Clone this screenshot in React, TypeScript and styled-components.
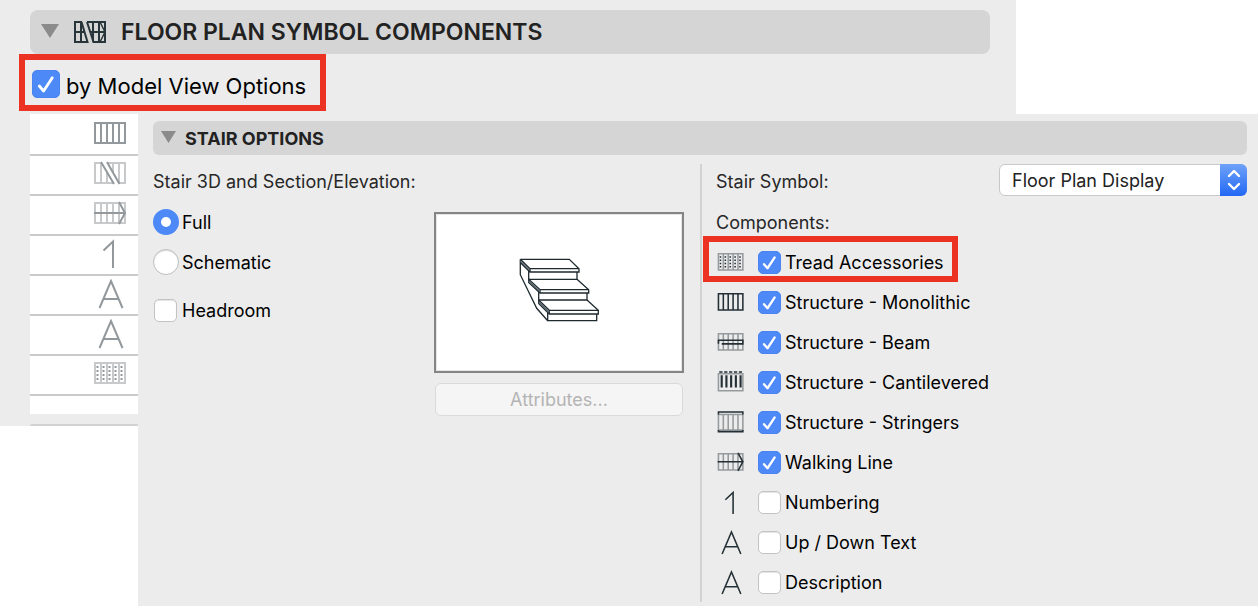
import React, { useState } from "react";
import styled, { createGlobalStyle, css } from "styled-components";

const GlobalStyle = createGlobalStyle`
  *, *::before, *::after { box-sizing: border-box; }
  body {
    margin: 0;
    background: #ffffff;
    color: #0c0c0c;
    font-family: Inter, "Liberation Sans", sans-serif;
    font-size: 18px;
    line-height: 24px;
  }
`;

/* ---------- page and panels ---------- */

const Page = styled.main`
  display: grid;
  grid-template-columns: 138px minmax(0, 1fr);
  grid-template-rows: 114px auto;
  min-height: 100vh;
`;

const SymbolPanel = styled.section`
  grid-area: 1 / 1 / 3 / 3;
  align-self: start;
  margin-right: 242px;
  padding: 10px 26px 0 30px;
  background: #ececec;
`;

const StairPanel = styled.section`
  grid-area: 2 / 2;
  padding: 7px 11px 3px 15px;
  background: #ececec;
`;

const SectionHeader = styled.button<{ $large?: boolean }>`
  display: flex;
  align-items: center;
  width: 100%;
  border: 0;
  background: #d5d5d5;
  color: #222222;
  font-family: inherit;
  text-align: left;
  white-space: nowrap;
  ${(p) =>
    p.$large
      ? css`
          height: 44px;
          padding: 0 11px;
          gap: 15px;
          border-radius: 8px;
          font-size: 23px;
          font-weight: 600;
        `
      : css`
          height: 34px;
          padding: 0 8px;
          gap: 9px;
          border-radius: 6px;
          font-size: 18px;
          font-weight: 700;
        `}
`;

const Triangle = styled.span<{ $large?: boolean }>`
  width: ${(p) => (p.$large ? 18 : 15)}px;
  height: ${(p) => (p.$large ? 14 : 12)}px;
  margin-bottom: 2px;
  background: #8b8b8b;
  clip-path: polygon(0 0, 100% 0, 50% 100%);
`;

/* ---------- option rows ---------- */

const OptionRow = styled.label<{ $large?: boolean; $tight?: boolean; $spaced?: boolean }>`
  position: relative;
  display: flex;
  align-items: center;
  gap: ${(p) => (p.$large ? 6 : p.$tight ? 3 : 4)}px;
  width: fit-content;
  height: ${(p) => (p.$large ? 60 : 40)}px;
  margin-top: ${(p) => (p.$spaced ? 8 : 0)}px;
  padding-left: ${(p) => (p.$large ? 2 : 0)}px;
  font-size: ${(p) => (p.$large ? 22 : 18)}px;
  color: #000000;
  white-space: nowrap;
`;

const OptionText = styled.span<{ $large?: boolean }>`
  padding-top: ${(p) => (p.$large ? 4 : 2)}px;
`;

const Highlight = styled.span<{ $large?: boolean }>`
  position: absolute;
  inset: ${(p) => (p.$large ? "0 -20px 3px -11px" : "-6px -14px 0 -13px")};
  border: 6px solid #eb3223;
  pointer-events: none;
`;

const IconSlot = styled.span`
  display: flex;
  margin-right: 10px;
`;

const BoxStack = styled.span<{ $size: number; $inset?: boolean }>`
  display: grid;
  width: ${(p) => p.$size}px;
  height: ${(p) => p.$size}px;
  margin: 0 ${(p) => (p.$inset ? "2px 0 1px" : "0")};

  > * {
    grid-area: 1 / 1;
    width: 100%;
    height: 100%;
    margin: 0;
  }

  svg {
    z-index: 1;
    pointer-events: none;
  }
`;

const CheckInput = styled.input`
  appearance: none;
  border: 1px solid #c3c3c3;
  border-radius: 5px;
  background: #ffffff;
  box-shadow: inset 0 1px 1px #e4e4e4;

  &:checked {
    border-color: #4a84f2;
    background: #4d89f7;
    box-shadow: none;
  }
`;

const RadioInput = styled.input`
  appearance: none;
  width: 26px;
  height: 26px;
  margin: 0;
  border: 1px solid #bdbdbd;
  border-radius: 50%;
  background: #ffffff;
  box-shadow: inset 0 1px 1px #dcdcdc;

  &:checked {
    border: 8px solid #4d89f7;
    box-shadow: none;
  }
`;

/* ---------- component list of the rear panel ---------- */

const IconList = styled.ul`
  height: 300px;
  margin: 0;
  padding: 2px 0 0;
  background: #ffffff;
  list-style: none;
`;

const IconListItem = styled.li`
  display: flex;
  align-items: center;
  height: 40px;
  padding: 0 0 4px 64px;
  border-bottom: 2px solid #cacaca;
`;

const NextSectionEdge = styled.div`
  height: 2px;
  margin-top: 10px;
  border-radius: 3px 3px 0 0;
  background: #d2d2d2;
`;

/* ---------- stair options body ---------- */

const Columns = styled.div`
  display: grid;
  grid-template-columns: minmax(0, 1fr) minmax(0, 1fr);
  margin-top: 9px;
`;

const SymbolColumn = styled.div`
  padding-left: 14px;
  border-left: 2px solid #d2d2d2;
`;

const FieldRow = styled.div`
  display: flex;
  align-items: center;
  justify-content: space-between;
  height: 32px;
  margin-bottom: 6px;
  color: #272727;
`;

const FieldLabel = styled.label`
  padding-top: 4px;
`;

const GroupLabel = styled.div`
  display: flex;
  align-items: center;
  height: 40px;
  padding-top: 2px;
  color: #272727;
`;

const ViewBody = styled.div`
  display: flex;
  justify-content: space-between;
  padding-right: 16px;
`;

const PreviewColumn = styled.div`
  display: flex;
  flex-direction: column;
  gap: 10px;
  width: 250px;
  padding-top: 10px;
`;

const Preview = styled.div`
  display: flex;
  align-items: center;
  justify-content: center;
  height: 161px;
  padding-bottom: 6px;
  border: 2px solid #858585;
  background: #ffffff;
  box-shadow: inset 0 0 0 1px #e6e6e6;
`;

const PushButton = styled.button`
  height: 33px;
  margin: 0 1px;
  border: 1px solid #dadada;
  border-radius: 6px;
  background: #f5f5f5;
  color: #b4b4b4;
  font-family: inherit;
  font-size: 18px;
`;

const SelectWrap = styled.div`
  display: grid;
  width: 248px;
  height: 32px;

  > * {
    grid-area: 1 / 1;
  }
`;

const Select = styled.select`
  appearance: none;
  width: 100%;
  height: 100%;
  padding: 0 36px 0 12px;
  border: 1px solid #c8c8c8;
  border-radius: 6px;
  background: #ffffff;
  color: #222222;
  font-family: inherit;
  font-size: 18px;
`;

const SelectArrows = styled.span`
  justify-self: end;
  display: flex;
  align-items: center;
  justify-content: center;
  width: 27px;
  border-radius: 0 6px 6px 0;
  background: linear-gradient(#6fa2f8, #2268f5);
  pointer-events: none;
`;

/* ---------- icons ---------- */

type IconName =
  | "monolithic"
  | "break"
  | "walking"
  | "one"
  | "letter"
  | "tread"
  | "beam"
  | "cantilevered"
  | "stringers";

type Tone = { dark: string; light: string };
const FADED: Tone = { dark: "#92989b", light: "#c8c9ca" };
const STRONG: Tone = { dark: "#232f34", light: "#959a9c" };

const Grid = ({ color, top = 6, bottom = 26 }: { color: string; top?: number; bottom?: number }) => (
  <path
    d={`M1 ${top}H31V${bottom}H1ZM7 ${top}V${bottom}M13 ${top}V${bottom}M19 ${top}V${bottom}M25 ${top}V${bottom}`}
    stroke={color}
  />
);

function Glyph({ name, tone }: { name: IconName; tone: Tone }) {
  const { dark, light } = tone;
  switch (name) {
    case "monolithic":
      return <Grid color={dark} />;
    case "break":
      return (
        <>
          <Grid color={light} />
          <path d="M7 5L20 27H25.500L13 5Z" fill="#ffffff" />
          <path d="M7 5L20 27M13 5L25.500 27" stroke={dark} />
        </>
      );
    case "walking":
      return (
        <>
          <Grid color={light} />
          <path d="M0 16H31M25 5L31 16L25 27" stroke={dark} />
        </>
      );
    case "one":
      return <path d="M9.500 13.500L19 4.500V31" stroke={dark} />;
    case "letter":
      return <path d="M5.500 31L17 4L28.500 31M9.500 22H24.500" stroke={dark} />;
    case "tread":
      return (
        <>
          <Grid color={light} />
          <path
            d="M3.500 9V25M9.500 9V25M15.500 9V25M21.500 9V25M27.500 9V25"
            stroke={dark}
            strokeDasharray="2 2"
          />
        </>
      );
    case "beam":
      return (
        <>
          <Grid color={light} />
          <path d="M1 18.500V14H31V18.500H5" stroke={dark} />
        </>
      );
    case "cantilevered":
      return (
        <>
          <path d="M1 6H31V27H1Z" stroke={light} />
          <path d="M5 8V23M10.800 8V23M16.600 8V23M22.400 8V23M28.200 8V23" stroke={dark} strokeWidth={2.6} />
          <path d="M2 4H31" stroke={dark} strokeDasharray="4 2" />
        </>
      );
    case "stringers":
      return (
        <>
          <Grid color={light} top={7} bottom={26} />
          <path d="M1 7V4H31V7M1 26V28H31V26" stroke={dark} />
        </>
      );
  }
}

const ListIcon = ({ name }: { name: IconName }) => (
  <svg width="32" height="32" viewBox="0 0 32 32" fill="none" strokeWidth="2" aria-hidden="true">
    <Glyph name={name} tone={FADED} />
  </svg>
);

const RowIcon = ({ name }: { name: IconName }) => (
  <svg width="28" height="28" viewBox="-2 -1 34.400 34.400" fill="none" strokeWidth="1.900" aria-hidden="true">
    <Glyph name={name} tone={STRONG} />
  </svg>
);

const FloorPlanIcon = () => (
  <svg width="32" height="22" viewBox="0 0 32 22" fill="none" stroke="#27343a" strokeWidth="2" aria-hidden="true">
    <path d="M8 1H1V21H13.500L7.500 1M7 1V21M1 11H10" />
    <path d="M13 1H31V21H19.500L13 1M19 1V21M25 1V21M16 11H31" />
    <path d="M26 1L31 11L26 21" strokeWidth="1.500" />
  </svg>
);

const StairDrawing = () => (
  <svg width="80" height="64" viewBox="0 0 80 64" fill="none" stroke="#1d292e" strokeWidth="1.300" aria-hidden="true">
    <path d="M1.300 1.300V16.700L17.700 50.300L28.700 62.700" />
    <path d="M1.300 1.300H50.300L60 10.700V14H11L1.300 4.500M1.300 1.300L11 10.700H60M11 10.700V14" />
    <path d="M9.700 13V21.300H58V14" />
    <path d="M58 21.300L69.700 31.700V35H21L9.700 24.500V21.300L21 31.700H69.700M21 31.700V35" />
    <path d="M19.700 34V42H68V35" />
    <path d="M68 42L79.300 52.300V56H30.300L19.700 45.500V42L30.300 52.300H79.300M30.300 52.300V56" />
    <path d="M28.700 55V62.700H77.700V56" />
    <path d="M1.300 3L11 12.400M9.700 23L21 33.400M19.700 43.700L30.300 54.200" stroke="#56636a" />
  </svg>
);

/* ---------- controls ---------- */

function CheckBox({ size = 23, inset, initial = false }: { size?: number; inset?: boolean; initial?: boolean }) {
  const [on, setOn] = useState(initial);
  return (
    <BoxStack $size={size} $inset={inset}>
      <CheckInput type="checkbox" checked={on} onChange={(e) => setOn(e.target.checked)} />
      {on && (
        <svg viewBox="0 0 28 28" fill="none" stroke="#ffffff" strokeWidth="2.800" strokeLinecap="round" strokeLinejoin="round" aria-hidden="true">
          <path d="M7.300 16L11.600 21L20.300 7.800" />
        </svg>
      )}
    </BoxStack>
  );
}

const listIcons: IconName[] = ["monolithic", "break", "walking", "one", "letter", "letter", "tread"];

const components: { icon: IconName; text: string; on: boolean; marked?: boolean }[] = [
  { icon: "tread", text: "Tread Accessories", on: true, marked: true },
  { icon: "monolithic", text: "Structure - Monolithic", on: true },
  { icon: "beam", text: "Structure - Beam", on: true },
  { icon: "cantilevered", text: "Structure - Cantilevered", on: true },
  { icon: "stringers", text: "Structure - Stringers", on: true },
  { icon: "walking", text: "Walking Line", on: true },
  { icon: "one", text: "Numbering", on: false },
  { icon: "letter", text: "Up / Down Text", on: false },
  { icon: "letter", text: "Description", on: false },
];

export default function App() {
  return (
    <>
      <GlobalStyle />
      <Page>
        <SymbolPanel>
          <SectionHeader $large type="button">
            <Triangle $large />
            <FloorPlanIcon />
            <span>FLOOR PLAN SYMBOL COMPONENTS</span>
          </SectionHeader>
          <OptionRow $large>
            <CheckBox size={28} initial />
            <OptionText $large>by Model View Options</OptionText>
            <Highlight $large />
          </OptionRow>
          <IconList>
            {listIcons.map((name, i) => (
              <IconListItem key={i}>
                <ListIcon name={name} />
              </IconListItem>
            ))}
          </IconList>
          <NextSectionEdge />
        </SymbolPanel>

        <StairPanel>
          <SectionHeader type="button">
            <Triangle />
            <span>STAIR OPTIONS</span>
          </SectionHeader>
          <Columns>
            <div role="radiogroup" aria-labelledby="stair-view">
              <FieldRow>
                <FieldLabel as="span" id="stair-view">
                  Stair 3D and Section/Elevation:
                </FieldLabel>
              </FieldRow>
              <ViewBody>
                <div>
                  <OptionRow $tight>
                    <RadioInput type="radio" name="view" defaultChecked />
                    <OptionText>Full</OptionText>
                  </OptionRow>
                  <OptionRow $tight>
                    <RadioInput type="radio" name="view" />
                    <OptionText>Schematic</OptionText>
                  </OptionRow>
                  <OptionRow $tight $spaced>
                    <CheckBox inset />
                    <OptionText>Headroom</OptionText>
                  </OptionRow>
                </div>
                <PreviewColumn>
                  <Preview>
                    <StairDrawing />
                  </Preview>
                  <PushButton type="button" disabled>
                    Attributes...
                  </PushButton>
                </PreviewColumn>
              </ViewBody>
            </div>
            <SymbolColumn>
              <FieldRow>
                <FieldLabel htmlFor="stair-symbol">Stair Symbol:</FieldLabel>
                <SelectWrap>
                  <Select id="stair-symbol">
                    <option>Floor Plan Display</option>
                  </Select>
                  <SelectArrows>
                    <svg width="14" height="22" viewBox="0 0 14 22" fill="none" stroke="#ffffff" strokeWidth="2.400" strokeLinecap="round" strokeLinejoin="round" aria-hidden="true">
                      <path d="M2 7L7 2L12 7M2 15L7 20L12 15" />
                    </svg>
                  </SelectArrows>
                </SelectWrap>
              </FieldRow>
              <GroupLabel>Components:</GroupLabel>
              {components.map((c) => (
                <OptionRow key={c.text}>
                  <IconSlot>
                    <RowIcon name={c.icon} />
                  </IconSlot>
                  <CheckBox initial={c.on} />
                  <OptionText>{c.text}</OptionText>
                  {c.marked && <Highlight />}
                </OptionRow>
              ))}
            </SymbolColumn>
          </Columns>
        </StairPanel>
      </Page>
    </>
  );
}
